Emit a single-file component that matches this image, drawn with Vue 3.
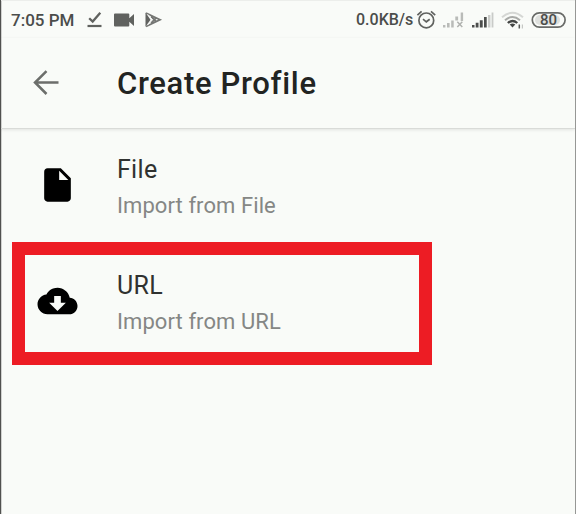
<script setup>
const options = [
  { title: 'File', detail: 'Import from File', icon: 'file', marked: false },
  { title: 'URL', detail: 'Import from URL', icon: 'cloud', marked: true },
]
</script>

<template>
  <div class="screen">
    <div class="status">
      <span class="clock">7:05 PM</span>
      <svg class="notices" width="80" height="20" viewBox="82 9 80 20">
        <path d="M88.200 17.200l3.500 3.400 7.600-8.800" fill="none" stroke="#60625f" stroke-width="2.300" />
        <path d="M86.500 25h14" stroke="#60625f" stroke-width="2.200" />
        <path d="M114 12.500h13.300q1 0 1 1v3.700l4.700-4.200v12l-4.700-4.200v3.700q0 1-1 1h-13.300q-1-.1-1-1v-11q0-1 1-1z" fill="#60625f" />
        <path d="M144.500 11.500l5 7.200-5 7z" fill="#60625f" />
        <path d="M145 12l14 6.700-14 6.800M150 15.500l5 5M150 22l5-5" fill="none" stroke="#747673" stroke-width="1.800" />
        <path d="M146.500 13.200l5 5.500-5 5.500" fill="none" stroke="#f0f2ef" stroke-width=".9" />
      </svg>
      <span class="speed">0.0KB/s</span>
      <svg class="signals" width="156" height="24" viewBox="416 7 156 24">
        <g fill="none" stroke="#60625f" stroke-width="1.700">
          <circle cx="426.300" cy="19.400" r="7.400" />
          <path d="M417.400 14.200l4.200-3.800M431 10.400l4.200 3.800M423 18.200l3.300 2.600 3.400-2.600" />
        </g>
        <g fill="#b9bbb8">
          <path d="M443 24h2.400v2.500H443zM447 22h2.600v4.500H447zM451.200 19.500h2.500v7h-2.500zM455.300 15.500h2.800v4h-2.800zM460.700 11.500h2.400V20h-2.400z" />
        </g>
        <g fill="#c9cbc8">
          <path d="M488 14h2.400v12.500H488zM491.600 11.500h1.800v15h-1.800z" />
        </g>
        <path d="M457.300 20.800l5 5.200m0-5.200l-5 5.200" stroke="#b0b2af" stroke-width="1.500" />
        <path d="M472 24h2.500v2.500H472zM475.700 21.800h2.800v4.700h-2.800zM479.800 19.300h2.900v7.200h-2.900zM484 16h2.700v10.500H484z" fill="#4c4e4c" />
        <g fill="none">
          <path d="M502 16.200q10.500-9 21 0" stroke="#d5d7d4" stroke-width="2" />
          <path d="M505 19.200q7.500-6.400 15 0" stroke="#a8aaa7" stroke-width="2" />
          <path d="M507.800 22q4.800-4 9.500 0" stroke="#444644" stroke-width="2.200" />
        </g>
        <path d="M509.700 23.400q2.800-2 5.600 0l-2.800 3z" fill="#444644" />
        <path d="M519.300 23.500v4" stroke="#555755" stroke-width="1.500" />
        <path d="M522.400 23.500v4" stroke="#c5c7c4" stroke-width="1.200" />
        <rect x="535" y="14" width="25" height="10" rx="5" fill="#dfe1de" />
        <rect x="532.300" y="11.800" width="32.800" height="14.400" rx="7.200" fill="none" stroke="#696b68" stroke-width="1.700" />
        <text x="548.500" y="24" text-anchor="middle" class="charge">80</text>
      </svg>
    </div>

    <header class="header">
      <svg class="back" width="40" height="40" viewBox="0 0 24 24">
        <path d="M19.500 11.700H5.100M12.300 4.900L5.400 11.700l6.900 6.900" fill="none" stroke="#6c6e6b" stroke-width="1.500" />
      </svg>
      <h1 class="title">Create Profile</h1>
    </header>

    <main class="list">
      <div v-for="o in options" :key="o.title" class="row" :class="{ marked: o.marked }">
        <svg class="icon" width="40" height="40" viewBox="-0.3 0 24 24">
          <path v-if="o.icon === 'file'" d="M6 2c-1.1 0-1.99.9-1.99 2L4 20c0 1.1.89 2 1.99 2H18c1.1 0 2-.9 2-2V8l-6-6H6zm7 7V3.500L18.500 9H13z" />
          <path v-else d="M19.350 10.040C18.670 6.590 15.640 4 12 4 9.110 4 6.600 5.640 5.350 8.040 2.340 8.360 0 10.910 0 14c0 3.310 2.690 6 6 6h13c2.760 0 5-2.240 5-5 0-2.640-2.050-4.780-4.650-4.960zM17 13l-5 5-5-5h3V9h4v4h3z" />
        </svg>
        <div class="texts">
          <span class="name">{{ o.title }}</span>
          <span class="detail">{{ o.detail }}</span>
        </div>
      </div>
    </main>
  </div>
</template>

<style>
body {
  margin: 0;
  background: #f9fbf8;
}
</style>

<style scoped>
.screen {
  box-sizing: border-box;
  width: 576px;
  height: 514px;
  overflow: hidden;
  background: #f9fbf8;
  border-left: 1px solid #50514f;
  border-right: 1px solid #969795;
  box-shadow: inset 1px 0 #d0d1cf;
  font-family: Roboto, sans-serif;
}
.status {
  display: flex;
  align-items: center;
  height: 38px;
  border-top: 1px solid #eceeeb;
  box-sizing: border-box;
  padding-left: 10px;
  color: #4b4d4b;
  font-size: 17px;
  font-weight: 500;
  white-space: nowrap;
}
.clock {
  flex: none;
  width: 72px;
}
.notices {
  flex: none;
}
.speed {
  flex: none;
  width: 60px;
  margin-left: 193px;
  font-size: 16px;
}
.signals {
  flex: none;
}
.charge {
  font-size: 15px;
  font-weight: 500;
  fill: #4b4d4b;
}
.header {
  display: flex;
  align-items: center;
  box-sizing: border-box;
  height: 91px;
  padding-left: 25px;
  border-bottom: 1px solid #d9dbd8;
  box-shadow: 0 1px 3px #00000018;
}
.back {
  flex: none;
}
.title {
  margin: 2px 0 0 51px;
  color: #222422;
  font-size: 31px;
  font-weight: 500;
  line-height: 40px;
  letter-spacing: 0.68px;
}
.row {
  display: flex;
  align-items: flex-start;
  box-sizing: border-box;
  width: 420px;
  height: 113px;
  padding: 36px 0 0 36px;
}
.row.marked {
  height: 123px;
  margin-left: 11px;
  padding: 26px 0 0 12px;
  border: 13px solid #ed1c24;
}
.icon {
  flex: none;
  overflow: visible;
  fill: #000;
}
.texts {
  display: flex;
  flex-direction: column;
  margin: -13px 0 0 40px;
}
.name {
  color: #303230;
  font-size: 25px;
  line-height: 36px;
  letter-spacing: 0.3px;
}
.detail {
  color: #858785;
  font-size: 22px;
  line-height: 36px;
  letter-spacing: 0.08px;
}
</style>
